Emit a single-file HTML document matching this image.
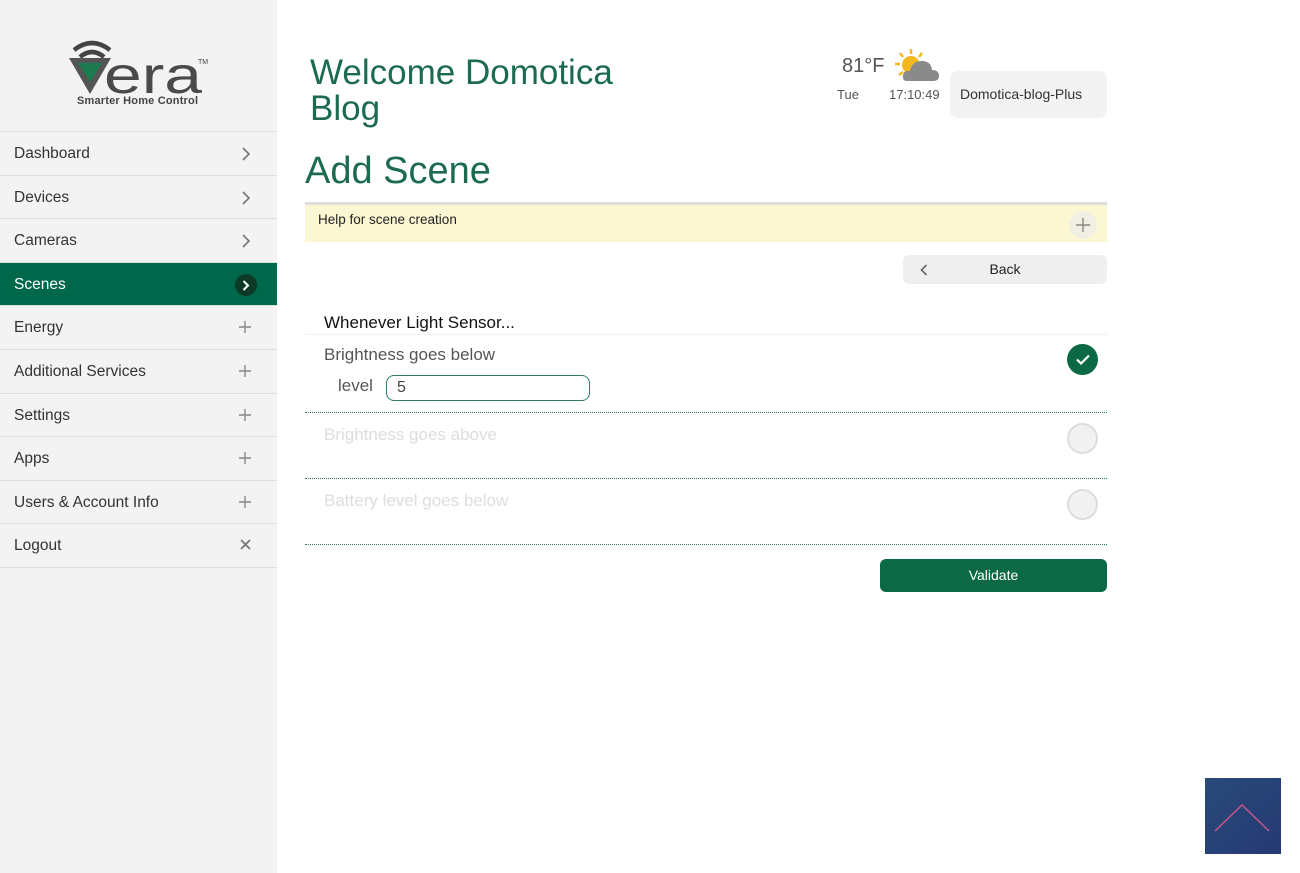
<!DOCTYPE html>
<html><head><meta charset="utf-8"><style>
*{box-sizing:border-box;margin:0;padding:0}
body{width:1300px;height:873px;position:relative;background:#fff;font-family:"Liberation Sans",sans-serif;overflow:hidden;color:#333}
.side{position:absolute;left:0;top:0;width:277px;height:873px;background:#f3f3f3}
.menu{position:absolute;top:131px;left:0;width:277px;border-top:1px solid #dcdcdc}
.mi{height:43.6px;border-bottom:1px solid #dcdcdc;font-size:15.5px;color:#333;padding-left:14px;line-height:43px;position:relative}
.mi svg{position:absolute;right:26px;top:15px}
.mi.act{background:#00684a;color:#fff}
.abs{position:absolute}
.g{color:#1c6b4e}
</style></head><body>
<div class="side">
 <svg class="abs" style="left:66px;top:36px" width="150" height="74" viewBox="0 0 150 74">
  <path d="M8 14 Q26 0 44 14" stroke="#444" stroke-width="4.5" fill="none"/>
  <path d="M14 21 Q26 11 38 21" stroke="#444" stroke-width="4.5" fill="none"/>
  <path d="M3 22 L24 58 L45 22 Z" fill="#555"/>
  <path d="M12 27 L24 46 L36 27 Z" fill="#1b7a4f"/>
  <text x="38" y="57" font-family="Liberation Sans" font-size="52" fill="#4a4a4a" textLength="98" lengthAdjust="spacingAndGlyphs">era</text>
  <text x="132" y="28" font-size="7" fill="#444">TM</text>
  <text x="11" y="68" font-size="11" fill="#444" font-weight="bold" textLength="121">Smarter Home Control</text>
 </svg>
 <div class="menu">
  <div class="mi">Dashboard<svg width="10" height="14"><path d="M2 1 L8 7 L2 13" stroke="#777" stroke-width="1.6" fill="none"/></svg></div>
  <div class="mi">Devices<svg width="10" height="14"><path d="M2 1 L8 7 L2 13" stroke="#777" stroke-width="1.6" fill="none"/></svg></div>
  <div class="mi">Cameras<svg width="10" height="14"><path d="M2 1 L8 7 L2 13" stroke="#777" stroke-width="1.6" fill="none"/></svg></div>
  <div class="mi act">Scenes<span class="abs" style="right:20px;top:11px;width:22px;height:22px;border-radius:50%;background:#0d3a27"><svg style="right:7px;top:6px" width="8" height="11"><path d="M1.5 1 L6 5.5 L1.5 10" stroke="#fff" stroke-width="2" fill="none"/></svg></span></div>
  <div class="mi">Energy<svg width="12" height="12"><path d="M6 0 V12 M0 6 H12" stroke="#888" stroke-width="1.4"/></svg></div>
  <div class="mi">Additional Services<svg width="12" height="12"><path d="M6 0 V12 M0 6 H12" stroke="#888" stroke-width="1.4"/></svg></div>
  <div class="mi">Settings<svg width="12" height="12"><path d="M6 0 V12 M0 6 H12" stroke="#888" stroke-width="1.4"/></svg></div>
  <div class="mi">Apps<svg width="12" height="12"><path d="M6 0 V12 M0 6 H12" stroke="#888" stroke-width="1.4"/></svg></div>
  <div class="mi">Users &amp; Account Info<svg width="12" height="12"><path d="M6 0 V12 M0 6 H12" stroke="#888" stroke-width="1.4"/></svg></div>
  <div class="mi">Logout<svg width="11" height="11"><path d="M1 1 L10 10 M10 1 L1 10" stroke="#777" stroke-width="1.8"/></svg></div>
 </div>
</div>
<div class="abs g" style="left:310px;top:55px;font-size:35px;line-height:36px">Welcome Domotica<br>Blog</div>
<div class="abs" style="left:842px;top:55px;font-size:20px;color:#555">81°F</div>
<svg class="abs" style="left:895px;top:48px" width="46" height="34" viewBox="0 0 46 34">
 <g stroke="#f3b81f" stroke-width="2.5"><line x1="16" y1="1" x2="16" y2="6"/><line x1="5" y1="5" x2="8" y2="9"/><line x1="0" y1="16" x2="5" y2="16"/><line x1="27" y1="5" x2="24" y2="9"/><line x1="4" y1="27" x2="8" y2="24"/></g>
 <circle cx="16" cy="17" r="9" fill="#f3b81f"/>
 <path d="M12 33 Q7 33 8 27 Q9 22 15 23 Q17 13 27 13 Q36 13 37 22 Q44 22 44 28 Q44 33 38 33 Z" fill="#8a8a8a"/>
</svg>
<div class="abs" style="left:837px;top:87px;font-size:13px;color:#555">Tue</div>
<div class="abs" style="left:889px;top:87px;font-size:13px;color:#555">17:10:49</div>
<div class="abs" style="left:950px;top:71px;width:157px;height:47px;background:#f2f2f2;border-radius:8px;font-size:14px;line-height:47px;padding-left:10px;color:#333">Domotica-blog-Plus</div>
<div class="abs g" style="left:305px;top:150px;font-size:38px">Add Scene</div>
<div class="abs" style="left:305px;top:202px;width:802px;height:40px;background:#fbf7d2;border-top:3px solid #ddd;font-size:13.5px;padding:7px 13px;color:#222">Help for scene creation
 <span class="abs" style="right:10px;top:6px;width:28px;height:28px;border-radius:50%;background:#f1efe4"><svg class="abs" style="left:7px;top:7px" width="14" height="14"><path d="M7 0 V14 M0 7 H14" stroke="#888" stroke-width="1.4"/></svg></span></div>
<div class="abs" style="left:903px;top:255px;width:204px;height:29px;background:#efefef;border-radius:6px;font-size:14px;line-height:29px;text-align:center;color:#222">Back<svg class="abs" style="left:17px;top:9px" width="8" height="12"><path d="M6.5 1 L1.5 6 L6.5 11" stroke="#666" stroke-width="1.6" fill="none"/></svg></div>
<div class="abs" style="left:324px;top:313px;font-size:17px;color:#111">Whenever Light Sensor...</div>
<div class="abs" style="left:305px;top:334px;width:802px;border-top:1px solid #f0f0f0"></div>
<div class="abs" style="left:324px;top:345px;font-size:17px;color:#555">Brightness goes below</div>
<div class="abs" style="left:338px;top:376px;font-size:17px;color:#555">level</div>
<div class="abs" style="left:386px;top:375px;width:204px;height:26px;border:1.5px solid #2e7d5e;border-radius:8px;font-size:16px;padding:3px 10px;color:#444">5</div>
<div class="abs" style="left:1067px;top:344px;width:31px;height:31px;border-radius:50%;background:#0b6a45"><svg class="abs" style="left:9px;top:10px" width="14" height="11"><path d="M1 5.5 L5 9.5 L13 1.5" stroke="#fff" stroke-width="2.2" fill="none"/></svg></div>
<div class="abs" style="left:305px;top:412px;width:802px;border-top:1px dotted #2c7a5a"></div>
<div class="abs" style="left:324px;top:425px;font-size:17px;color:#ddd">Brightness goes above</div>
<div class="abs" style="left:1067px;top:423px;width:31px;height:31px;border-radius:50%;background:#f1f1f1;border:2px solid #ddd"></div>
<div class="abs" style="left:305px;top:478px;width:802px;border-top:1px dotted #2c7a5a"></div>
<div class="abs" style="left:324px;top:491px;font-size:17px;color:#ddd">Battery level goes below</div>
<div class="abs" style="left:1067px;top:489px;width:31px;height:31px;border-radius:50%;background:#f1f1f1;border:2px solid #ddd"></div>
<div class="abs" style="left:305px;top:544px;width:802px;border-top:1px dotted #2c7a5a"></div>
<div class="abs" style="left:880px;top:559px;width:227px;height:33px;background:#0b6a45;border-radius:6px;color:#fff;font-size:14px;text-align:center;line-height:33px">Validate</div>
<svg class="abs" style="left:1205px;top:778px" width="76" height="76" viewBox="0 0 76 76">
 <defs><linearGradient id="bg" x1="0" y1="0" x2="1" y2="1"><stop offset="0" stop-color="#2a4a7a"/><stop offset="1" stop-color="#243a72"/></linearGradient></defs>
 <rect width="76" height="76" fill="url(#bg)"/>
 <path d="M10 53 L37 27 L64 53" stroke="#c8568e" stroke-width="1.5" fill="none"/>
</svg>
</body></html>
